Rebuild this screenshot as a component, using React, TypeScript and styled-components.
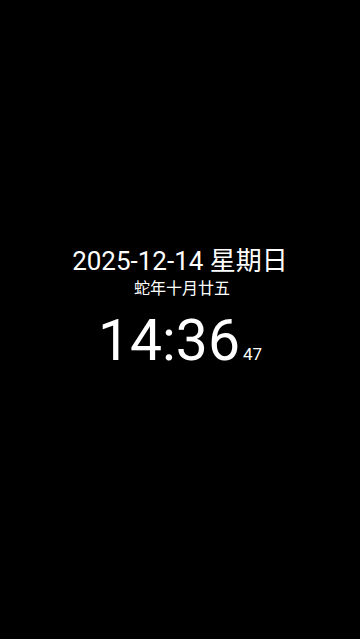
import React from "react";
import styled, { createGlobalStyle } from "styled-components";

const Global = createGlobalStyle`
  html, body { margin: 0; padding: 0; background: #000; }
  body { font-family: Roboto, "Noto Sans CJK SC", sans-serif; color: #fff; }
`;

const Screen = styled.div`
  width: 360px;
  height: 639px;
  background: #000;
  display: flex;
  flex-direction: column;
  align-items: center;
  padding-top: 248px;
  box-sizing: border-box;
`;

const DateLine = styled.div`
  font-size: 26px;
  line-height: 26px;
  white-space: nowrap;
`;

const Lunar = styled.div`
  font-family: "Noto Sans CJK SC", sans-serif;
  font-size: 16px;
  line-height: 16px;
  margin-top: 5px;
  margin-left: 4px;
`;

const TimeRow = styled.div`
  display: flex;
  align-items: baseline;
  margin-top: 17px;
`;

const Time = styled.span`
  font-size: 57px;
  line-height: 57px;
`;

const Seconds = styled.span`
  font-size: 17px;
  line-height: 17px;
  margin-left: 3px;
`;

export default function App() {
  return (
    <>
      <Global />
      <Screen>
        <DateLine>2025-12-14 星期日</DateLine>
        <Lunar>蛇年十月廿五</Lunar>
        <TimeRow>
          <Time>14:36</Time>
          <Seconds>47</Seconds>
        </TimeRow>
      </Screen>
    </>
  );
}
